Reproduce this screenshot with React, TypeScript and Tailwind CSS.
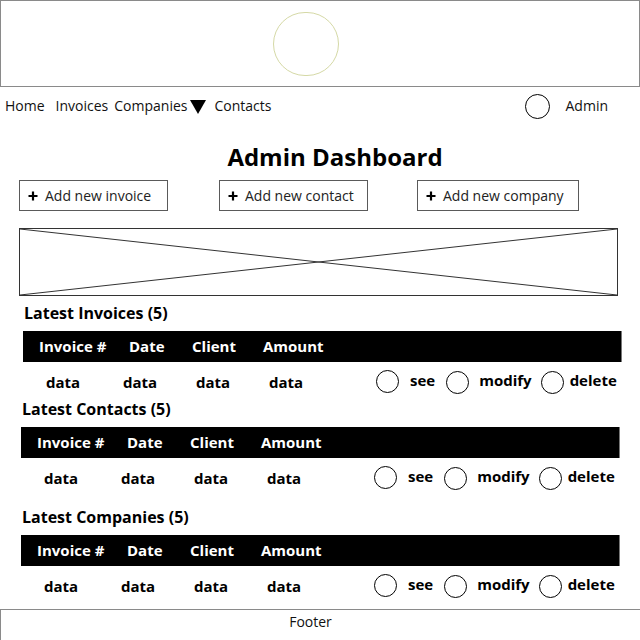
const font = { fontFamily: '"Open Sans", "Noto Sans", sans-serif' };

function Plus() {
  return (
    <svg width="10" height="10" viewBox="0 0 10 10" className="shrink-0">
      <path d="M5 0.5v9M0.5 5h9" stroke="#000" strokeWidth="2.2" />
    </svg>
  );
}

function AddButton({ label, className }: { label: string; className: string }) {
  return (
    <div className={`h-[31px] flex items-center border border-[#5a5a5a] text-[14px] text-[#222] ${className}`}>
      <span className="ml-[8px] mr-[7px] flex"><Plus /></span>
      <span>{label}</span>
    </div>
  );
}

function Ring({ className = "" }: { className?: string }) {
  return <span className={`inline-block w-[23px] h-[23px] rounded-full border border-black shrink-0 ${className}`} />;
}

function Section({
  title,
  left,
  mt,
  width,
}: {
  title: string;
  left: number;
  mt: string;
  width: string;
}) {
  return (
    <div className={mt}>
      <div className="h-[22px] flex items-center text-[16px] font-bold text-black" style={{ marginLeft: left + 1 }}>
        {title}
      </div>
      <div
        className={`mt-[7px] h-[31px] bg-black text-white font-bold text-[15px] flex items-center pl-[16px] border-r border-[#777] ${width}`}
        style={{ marginLeft: left }}
      >
        <span className="w-[90px]">Invoice #</span>
        <span className="w-[63px]">Date</span>
        <span className="w-[71px]">Client</span>
        <span>Amount</span>
      </div>
      <div className="h-[36px] flex items-center text-[15px] font-bold text-black pl-[23px]" style={{ marginLeft: left }}>
        <span className="w-[77px] mt-[5px]">data</span>
        <span className="w-[73px] mt-[5px]">data</span>
        <span className="w-[73px] mt-[5px]">data</span>
        <span className="w-[107px] mt-[5px]">data</span>
        <Ring className="mt-[2px]" />
        <span className="ml-[11px]">see</span>
        <Ring className="ml-[11px] mt-[5px]" />
        <span className="ml-[10px]">modify</span>
        <Ring className="ml-[9px] mt-[5px]" />
        <span className="ml-[6px]">delete</span>
      </div>
    </div>
  );
}

export default function App() {
  return (
    <div className="w-[640px] h-[640px] overflow-hidden bg-white flex flex-col" style={font}>
      <header className="h-[87px] border border-[#8a8a8a] flex items-center justify-center pr-[28px] shrink-0">
        <span className="w-[66px] h-[64px] rounded-full border border-[#d5d9a6]" />
      </header>

      <nav className="h-[36px] flex items-center text-[14px] text-[#111] pl-[5px] shrink-0">
        <span>Home</span>
        <span className="ml-[11px]">Invoices</span>
        <span className="ml-[6px]">Companies</span>
        <svg width="16" height="14" viewBox="0 0 16 14" className="ml-[3px] mt-[4px]">
          <path d="M0 0h16L8 14z" fill="#000" />
        </svg>
        <span className="ml-[8px]">Contacts</span>
        <span className="ml-auto w-[25px] h-[25px] rounded-full border border-black mt-[2px]" />
        <span className="ml-[16px] mr-[32px]">Admin</span>
      </nav>

      <h1 className="mt-[18px] h-[32px] flex items-center justify-center pl-[30px] text-[24px] font-bold text-black">
        Admin Dashboard
      </h1>

      <div className="mt-[7px] flex">
        <AddButton label="Add new invoice" className="ml-[19px] w-[149px]" />
        <AddButton label="Add new contact" className="ml-[51px] w-[149px]" />
        <AddButton label="Add new company" className="ml-[49px] w-[162px]" />
      </div>

      <div className="mt-[17px] ml-[19px] w-[599px] h-[68px] border border-[#333] shrink-0">
        <svg width="597" height="66" viewBox="0 0 597 66" className="block">
          <path d="M0 0L597 66M0 66L597 0" stroke="#333" strokeWidth="1" />
        </svg>
      </div>

      <Section title="Latest Invoices (5)" left={23} mt="mt-[6px]" width="w-[599px]" />
      <Section title="Latest Contacts (5)" left={21} mt="mt-0" width="w-[599px]" />
      <Section title="Latest Companies (5)" left={21} mt="mt-[12px]" width="w-[599px]" />

      <footer className="mt-[7px] flex-1 border-t border-l border-[#8a8a8a] flex justify-center pr-[20px] pt-[1px] text-[14px] text-[#111]">
        Footer
      </footer>
    </div>
  );
}
